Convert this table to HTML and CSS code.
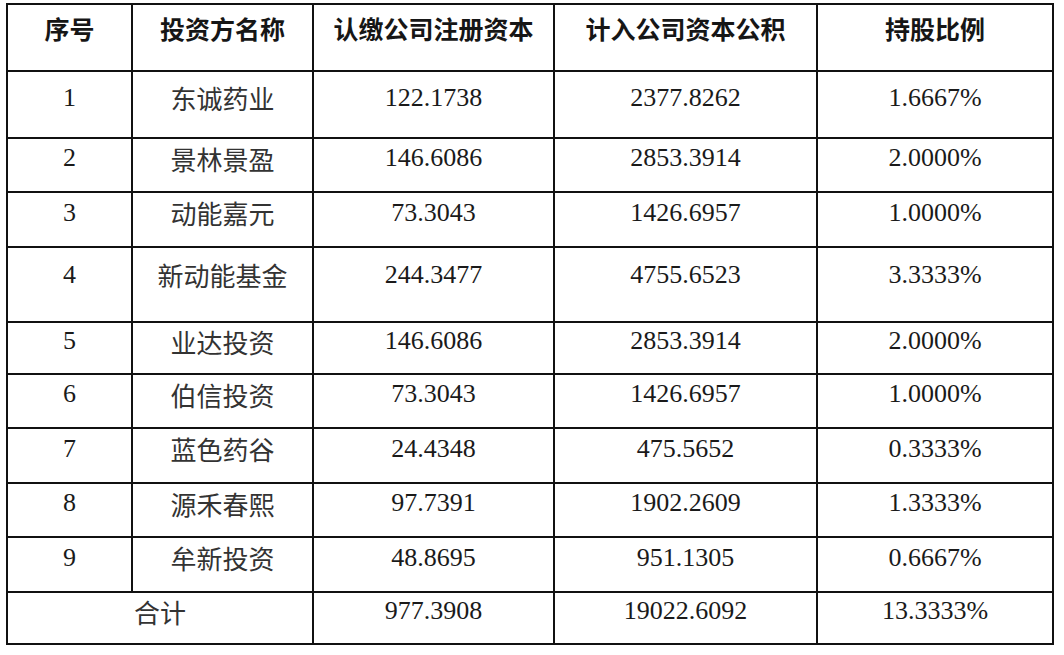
FILE: index.html
```html
<!DOCTYPE html>
<html lang="zh-CN">
<head>
<meta charset="utf-8">
<title>投资方认缴情况</title>
<link rel="stylesheet" href="styles.css">
</head>
<body>
<div class="tbl">
  <div class="c h">序号</div>
  <div class="c h">投资方名称</div>
  <div class="c h">认缴公司注册资本</div>
  <div class="c h">计入公司资本公积</div>
  <div class="c h">持股比例</div>

  <div class="c num">1</div>
  <div class="c zh">东诚药业</div>
  <div class="c num">122.1738</div>
  <div class="c num">2377.8262</div>
  <div class="c num">1.6667%</div>

  <div class="c num">2</div>
  <div class="c zh">景林景盈</div>
  <div class="c num">146.6086</div>
  <div class="c num">2853.3914</div>
  <div class="c num">2.0000%</div>

  <div class="c num">3</div>
  <div class="c zh">动能嘉元</div>
  <div class="c num">73.3043</div>
  <div class="c num">1426.6957</div>
  <div class="c num">1.0000%</div>

  <div class="c num tall">4</div>
  <div class="c zh tall">新动能基金</div>
  <div class="c num tall">244.3477</div>
  <div class="c num tall">4755.6523</div>
  <div class="c num tall">3.3333%</div>

  <div class="c num">5</div>
  <div class="c zh">业达投资</div>
  <div class="c num">146.6086</div>
  <div class="c num">2853.3914</div>
  <div class="c num">2.0000%</div>

  <div class="c num">6</div>
  <div class="c zh">伯信投资</div>
  <div class="c num">73.3043</div>
  <div class="c num">1426.6957</div>
  <div class="c num">1.0000%</div>

  <div class="c num">7</div>
  <div class="c zh">蓝色药谷</div>
  <div class="c num">24.4348</div>
  <div class="c num">475.5652</div>
  <div class="c num">0.3333%</div>

  <div class="c num">8</div>
  <div class="c zh">源禾春熙</div>
  <div class="c num">97.7391</div>
  <div class="c num">1902.2609</div>
  <div class="c num">1.3333%</div>

  <div class="c num">9</div>
  <div class="c zh">牟新投资</div>
  <div class="c num">48.8695</div>
  <div class="c num">951.1305</div>
  <div class="c num">0.6667%</div>

  <div class="c zh span2">合计</div>
  <div class="c num">977.3908</div>
  <div class="c num">19022.6092</div>
  <div class="c num">13.3333%</div>
</div>
</body>
</html>
```

FILE: styles.css
```css
html, body {
  margin: 0;
  padding: 0;
  background: #ffffff;
}

body {
  padding: 3px 0 0 6px;
}

.tbl {
  display: grid;
  grid-template-columns: 125px 181px 241px 263px 236px;
  grid-template-rows: 67px 67px 54px 55px 75px 52px 54px 55px 54px 55px 52px;
  width: max-content;
  border-top: 2px solid #111;
  border-left: 2px solid #111;
}

.c {
  box-sizing: border-box;
  border-right: 2px solid #111;
  border-bottom: 2px solid #111;
  display: flex;
  align-items: center;
  justify-content: center;
  padding-bottom: 14px;
  white-space: nowrap;
}

.h {
  font-family: "Noto Sans CJK SC", "Noto Sans", sans-serif;
  font-weight: 700;
  font-size: 25px;
  color: #161616;
  padding-bottom: 20px;
}

.tall {
  padding-bottom: 20px;
}

.zh {
  font-family: "Noto Sans CJK SC", "Noto Sans", sans-serif;
  font-weight: 400;
  font-size: 26px;
  color: #333333;
}

.num {
  font-family: "Liberation Serif", "Times New Roman", serif;
  font-size: 26px;
  color: #1a1a1a;
}

.span2 {
  grid-column: span 2;
}
```
